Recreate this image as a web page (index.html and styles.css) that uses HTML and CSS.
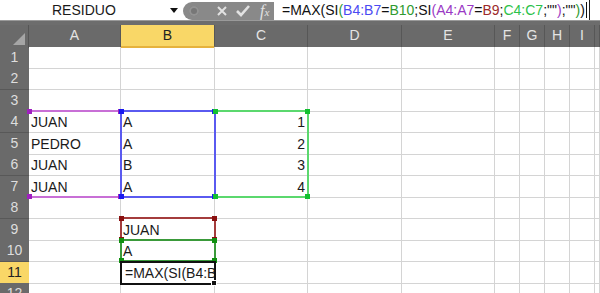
FILE: index.html
```html
<!DOCTYPE html>
<html>
<head>
    <meta charset="UTF-8" />
    <link rel="stylesheet" href="styles.css">
</head>
<body>

    <div class="formula-bar">
        <div class="name-box">
            <span class="name">RESIDUO</span>
            <span class="drop"></span>
        </div>
        <div class="tools">
            <span class="knob"></span>
            <svg class="ico" width="14" height="14" viewBox="0 0 14 14">
                <path d="M3 3 L11 11 M11 3 L3 11" stroke="#e2e2e2" stroke-width="2" fill="none"/>
            </svg>
            <svg class="ico" width="16" height="14" viewBox="0 0 16 14">
                <path d="M2 7 L6 11 L14 2" stroke="#e2e2e2" stroke-width="2.6" fill="none"/>
            </svg>
            <span class="fx">f<i>x</i></span>
        </div>
        <div class="formula">=MAX(SI<span class="p-green">(</span><span class="p-blue">B4:B7</span>=<span class="p-green">B10</span>;SI<span class="p-purple">(</span><span class="p-purple">A4:A7</span>=<span class="p-red">B9</span>;<span class="p-lime">C4:C7</span>;""<span class="p-purple">)</span>;""<span class="p-green">)</span>)<span class="caret"></span></div>
    </div>

    <div class="strip"></div>

    <div class="sheet">
        <div class="row head">
            <div class="corner"></div>
            <div class="ch">A</div><div class="ch active">B</div><div class="ch">C</div><div class="ch">D</div><div class="ch">E</div>
            <div class="ch">F</div><div class="ch">G</div><div class="ch">H</div><div class="ch">I</div><div class="ch"></div>
        </div>

        <div class="row">
            <div class="rh">1</div>
            <div class="c"></div><div class="c"></div><div class="c"></div><div class="c"></div><div class="c"></div>
            <div class="c"></div><div class="c"></div><div class="c"></div><div class="c"></div><div class="c"></div>
        </div>
        <div class="row">
            <div class="rh">2</div>
            <div class="c"></div><div class="c"></div><div class="c"></div><div class="c"></div><div class="c"></div>
            <div class="c"></div><div class="c"></div><div class="c"></div><div class="c"></div><div class="c"></div>
        </div>
        <div class="row">
            <div class="rh">3</div>
            <div class="c"></div><div class="c"></div><div class="c"></div><div class="c"></div><div class="c"></div>
            <div class="c"></div><div class="c"></div><div class="c"></div><div class="c"></div><div class="c"></div>
        </div>
        <div class="row">
            <div class="rh">4</div>
            <div class="c">JUAN</div><div class="c">A</div><div class="c num">1</div><div class="c"></div><div class="c"></div>
            <div class="c"></div><div class="c"></div><div class="c"></div><div class="c"></div><div class="c"></div>
        </div>
        <div class="row">
            <div class="rh">5</div>
            <div class="c">PEDRO</div><div class="c">A</div><div class="c num">2</div><div class="c"></div><div class="c"></div>
            <div class="c"></div><div class="c"></div><div class="c"></div><div class="c"></div><div class="c"></div>
        </div>
        <div class="row">
            <div class="rh">6</div>
            <div class="c">JUAN</div><div class="c">B</div><div class="c num">3</div><div class="c"></div><div class="c"></div>
            <div class="c"></div><div class="c"></div><div class="c"></div><div class="c"></div><div class="c"></div>
        </div>
        <div class="row">
            <div class="rh">7</div>
            <div class="c">JUAN</div><div class="c">A</div><div class="c num">4</div><div class="c"></div><div class="c"></div>
            <div class="c"></div><div class="c"></div><div class="c"></div><div class="c"></div><div class="c"></div>
        </div>
        <div class="row">
            <div class="rh">8</div>
            <div class="c"></div><div class="c"></div><div class="c"></div><div class="c"></div><div class="c"></div>
            <div class="c"></div><div class="c"></div><div class="c"></div><div class="c"></div><div class="c"></div>
        </div>
        <div class="row">
            <div class="rh">9</div>
            <div class="c"></div><div class="c">JUAN</div><div class="c"></div><div class="c"></div><div class="c"></div>
            <div class="c"></div><div class="c"></div><div class="c"></div><div class="c"></div><div class="c"></div>
        </div>
        <div class="row">
            <div class="rh">10</div>
            <div class="c"></div><div class="c">A</div><div class="c"></div><div class="c"></div><div class="c"></div>
            <div class="c"></div><div class="c"></div><div class="c"></div><div class="c"></div><div class="c"></div>
        </div>
        <div class="row">
            <div class="rh active">11</div>
            <div class="c"></div><div class="c edit">=MAX(SI(B4:B</div><div class="c"></div><div class="c"></div><div class="c"></div>
            <div class="c"></div><div class="c"></div><div class="c"></div><div class="c"></div><div class="c"></div>
        </div>
        <div class="row">
            <div class="rh">12</div>
            <div class="c"></div><div class="c"></div><div class="c"></div><div class="c"></div><div class="c"></div>
            <div class="c"></div><div class="c"></div><div class="c"></div><div class="c"></div><div class="c"></div>
        </div>

        <!-- range highlights drawn over the grid -->
        <div class="range r-purple"><i class="h tl"></i><i class="h tr"></i><i class="h bl"></i><i class="h br"></i></div>
        <div class="range r-blue"><i class="h tl"></i><i class="h tr"></i><i class="h bl"></i><i class="h br"></i></div>
        <div class="range r-lime"><i class="h tl"></i><i class="h tr"></i><i class="h bl"></i><i class="h br"></i></div>
        <div class="range r-red"><i class="h tl"></i><i class="h tr"></i><i class="h bl"></i><i class="h br"></i></div>
        <div class="range r-green"><i class="h tl"></i><i class="h tr"></i><i class="h bl"></i><i class="h br"></i></div>
        <div class="pink-line"></div>
        <div class="range r-active"><i class="fill"></i></div>
    </div>

</body>
</html>
```

FILE: styles.css
```css
body {
    margin: 0;
    width: 600px;
    height: 293px;
    overflow: hidden;
    background: #ffffff;
    font-family: "Liberation Sans", Arial, sans-serif;
    color: #1a1a1a;
}

/* formula bar along the top */
.formula-bar {
    display: flex;
    height: 20px;
    background: #ffffff;
}

.name-box {
    width: 183px;
    display: flex;
    align-items: center;
    font-size: 14px;
}

    .name-box .name {
        margin-left: 52px;
        flex: 1;
    }

    .name-box .drop {
        width: 0;
        height: 0;
        border: 4px solid transparent;
        border-top: 5px solid #111;
        border-bottom: 0;
        margin-right: 5px;
    }

.tools {
    width: 91px;
    margin-top: 2px;
    background: #898989;
    border-radius: 10px 0 0 10px;
    display: flex;
    align-items: center;
    gap: 6px;
    padding-left: 6px;
    box-sizing: border-box;
}

    .tools .knob {
        width: 10px;
        height: 10px;
        border-radius: 50%;
        background: #777;
        box-shadow: inset 0 0 0 2px #939393;
        margin-right: 10px;
    }

    .tools .fx {
        font-family: "Liberation Serif", serif;
        font-style: italic;
        color: #e2e2e2;
        font-size: 16px;
        margin-left: 3px;
    }

        .tools .fx i {
            font-size: 11px;
        }

.formula {
    width: 316px;
    font-size: 14px;
    line-height: 20px;
    padding-left: 8px;
    box-sizing: border-box;
    border-right: 1px solid #222;
    white-space: nowrap;
    overflow: hidden;
    color: #111;
}

.caret {
    display: inline-block;
    width: 1px;
    height: 16px;
    background: #111;
    vertical-align: -3px;
    margin-left: 1px;
}

.p-blue { color: #4a4af2; }
.p-green { color: #2f9a2f; }
.p-purple { color: #9a39c4; }
.p-red { color: #9c2a2a; }
.p-lime { color: #2cc24a; }

.strip {
    height: 5px;
    background: #6d6d6d;
    border-top: 1px solid #9a9a9a;
    box-sizing: border-box;
}

/* the worksheet */
.sheet {
    position: relative;
}

.row {
    display: grid;
    grid-template-columns: 29px 92px 94px 93px 94px 93px 25px 25px 25px 25px 5px;
    height: 21.5px;
    font-size: 14px;
}

.head {
    background: #6a6a6a;
}

.corner {
    background: #6a6a6a;
    border-right: 1px solid #555;
    position: relative;
}

    .corner:after {
        content: "";
        position: absolute;
        right: 3px;
        bottom: 3px;
        border: 6px solid transparent;
        border-right-color: #a6a6a6;
        border-bottom-color: #a6a6a6;
    }

.ch {
    border-right: 1px solid #575757;
    color: #e4e4e4;
    text-align: center;
    line-height: 21px;
}

    .ch.active {
        background: #f9d767;
        color: #222;
        border-bottom: 2px solid #e6b23c;
    }

.rh {
    background: #6a6a6a;
    color: #dedede;
    text-align: center;
    line-height: 21px;
    border-bottom: 1px solid #585858;
    box-sizing: border-box;
}

    .rh.active {
        background: #f9d767;
        color: #222;
    }

.c {
    border-right: 1px solid #d4d4d4;
    border-bottom: 1px solid #d4d4d4;
    padding: 0 2px;
    line-height: 22px;
    white-space: nowrap;
    overflow: hidden;
    box-sizing: border-box;
}

    .c.num {
        text-align: right;
    }

    .c.edit {
        padding-left: 4px;
    }

/* coloured reference ranges */
.range {
    position: absolute;
    box-sizing: border-box;
    border: 2px solid;
}

.r-purple {
    left: 28px;
    top: 85px;
    width: 94px;
    height: 88px;
    border-color: #c86fd6;
    border-left-color: transparent;
}

.r-blue {
    left: 120px;
    top: 85px;
    width: 96px;
    height: 88px;
    border-color: #5a5af0;
}

.r-lime {
    left: 214px;
    top: 85px;
    width: 95px;
    height: 88px;
    border-color: #5bd86e;
    border-left-color: transparent;
}

.r-red {
    left: 120px;
    top: 192px;
    width: 96px;
    height: 24px;
    border-color: #a43c3c;
}

.r-green {
    left: 120px;
    top: 214px;
    width: 96px;
    height: 23px;
    border-color: #3a9a3a;
}

.pink-line {
    position: absolute;
    left: 122px;
    top: 236px;
    width: 92px;
    height: 1px;
    background: #ee88ee;
}

.r-active {
    left: 120px;
    top: 236px;
    width: 96px;
    height: 24px;
    border-color: #111;
}

.h {
    position: absolute;
    width: 5px;
    height: 5px;
}

.r-purple .h { background: #a020c0; }
.r-blue .h { background: #1a1af0; }
.r-lime .h { background: #12c030; }
.r-red .h { background: #8a1010; }
.r-green .h { background: #109010; }

.tl { left: -3px; top: -3px; }
.tr { right: -3px; top: -3px; }
.bl { left: -3px; bottom: -3px; }
.br { right: -3px; bottom: -3px; }

.fill {
    position: absolute;
    right: -3px;
    bottom: -3px;
    width: 4px;
    height: 4px;
    background: #111;
    border: 1px solid #fff;
}
```
